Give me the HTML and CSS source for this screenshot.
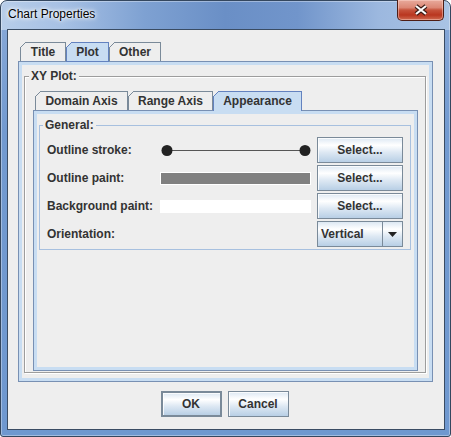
FILE: index.html
```html
<!DOCTYPE html>
<html>
<head>
<meta charset="utf-8">
<title>Chart Properties</title>
<link rel="stylesheet" href="styles.css">
</head>
<body>
<div class="window">
  <div class="titlebar">
    <span class="title">Chart Properties</span>
    <div class="close">
      <svg width="16" height="12" viewBox="0 0 16 12"><path d="M3 2L13 10M13 2L3 10" stroke="#3a1a14" stroke-width="4.4"/><path d="M3 2L13 10M13 2L3 10" stroke="#ffffff" stroke-width="2.2"/></svg>
    </div>
  </div>
  <div class="client">
    <div class="tabbed outer">
      <div class="tabrow">
        <div class="tab t-title">Title</div>
        <div class="tab sel focus t-plot">Plot</div>
        <div class="tab t-other">Other</div>
      </div>
      <div class="panel">
        <fieldset class="etched">
          <legend>XY Plot:</legend>
          <div class="tabbed inner">
            <div class="tabrow">
              <div class="tab t-domain">Domain Axis</div>
              <div class="tab t-range">Range Axis</div>
              <div class="tab sel t-app">Appearance</div>
            </div>
            <div class="panel">
              <fieldset class="general">
                <legend>General:</legend>
                <div class="grid">
                  <div class="lbl">Outline stroke:</div>
                  <div class="val">
                    <svg class="stroke" width="151" height="26" viewBox="0 0 151 26"><line x1="7" y1="13.5" x2="145" y2="13.5" stroke="#555" stroke-width="1"/><circle cx="7" cy="13.5" r="5.5" fill="#222"/><circle cx="145" cy="13.5" r="5.5" fill="#222"/></svg>
                  </div>
                  <button class="btn">Select...</button>

                  <div class="lbl">Outline paint:</div>
                  <div class="val"><div class="swatch gray"></div></div>
                  <button class="btn">Select...</button>

                  <div class="lbl">Background paint:</div>
                  <div class="val"><div class="swatch white"></div></div>
                  <button class="btn">Select...</button>

                  <div class="lbl">Orientation:</div>
                  <div class="val"></div>
                  <div class="combo">
                    <span class="combo-text">Vertical</span>
                    <span class="combo-arrow"><svg width="9" height="5" viewBox="0 0 9 5"><path d="M0 0H9L4.5 5Z" fill="#222"/></svg></span>
                  </div>
                </div>
              </fieldset>
            </div>
          </div>
        </fieldset>
      </div>
    </div>
    <div class="actions">
      <button class="btn default">OK</button>
      <button class="btn">Cancel</button>
    </div>
  </div>
</div>
</body>
</html>
```

FILE: styles.css
```css
* { box-sizing: border-box; }
html, body { margin: 0; padding: 0; }
body {
  width: 451px;
  height: 437px;
  overflow: hidden;
  background: #ffffff;
  font-family: "Liberation Sans", Arial, sans-serif;
  font-size: 12px;
  font-weight: bold;
  color: #333333;
}

/* window frame */
.window {
  width: 451px;
  height: 437px;
  display: flex;
  flex-direction: column;
  border: 1px solid #34475f;
  border-radius: 7px 7px 3px 3px;
  padding: 0 5px 6px 6px;
  background:
    linear-gradient(90deg, #b7cde9 0%, #a6c0e4 14%, #7ea1d2 32%, #6a8fc6 50%, #7195cb 66%, #9cb8df 84%, #a9c3e4 100%) top left / 100% 29px no-repeat,
    linear-gradient(180deg, #8aaad8 0%, #729ad0 30%, #6f98cf 100%);
  box-shadow: inset 0 0 0 1px rgba(255,255,255,0.35);
}
.titlebar {
  height: 28px;
  flex: none;
  display: flex;
  align-items: flex-start;
}
.title {
  margin: 6px 0 0 1px;
  line-height: 14px;
  font-weight: normal;
  color: #000;
  text-shadow: 0 0 4px #fff, 0 0 6px #fff, 0 0 2px #e8f0fa;
}
.close {
  margin: -1px 1px 0 auto;
  width: 47px;
  height: 21px;
  border: 1px solid #4e1d15;
  border-top: none;
  border-radius: 0 0 5px 5px;
  background: linear-gradient(180deg, #e8aa9c 0%, #dc8775 38%, #c6533c 50%, #b9361f 75%, #cf6a50 100%);
  box-shadow: inset 0 0 0 1px rgba(255,220,210,0.45);
  display: flex;
  align-items: center;
  justify-content: center;
}

/* client area */
.client {
  flex: 1;
  min-height: 0;
  display: flex;
  flex-direction: column;
  border: 1px solid #3a4c63;
  background: #eeeeee;
  padding: 12px 11px 12px 10px;
}

/* tabbed panes */
.tabbed {
  flex: 1;
  min-height: 0;
  display: flex;
  flex-direction: column;
}
.tabrow {
  display: flex;
  height: 19px;
  padding-left: 2px;
  flex: none;
}
.tab {
  --bc: #7a8a99;
  position: relative;
  height: 19px;
  padding: 0;
  text-align: center;
  line-height: 18px;
  white-space: nowrap;
  border: 1px solid var(--bc);
  border-bottom: none;
  background: #eeeeee;
}
.t-title { width: 46px; }
.t-plot { width: 43px; }
.t-other { width: 52px; }
.t-domain { width: 93px; }
.t-range { width: 85px; }
.t-app { width: 89px; }
.tab::before {
  content: "";
  position: absolute;
  top: -1px;
  left: -1px;
  width: 6px;
  height: 6px;
  background: linear-gradient(to bottom right, #eeeeee 0, #eeeeee calc(50% - 0.7px), var(--bc) calc(50% - 0.7px), var(--bc) calc(50% + 0.7px), transparent calc(50% + 0.7px));
}
.tab.sel {
  --bc: #6382bf;
  background: #c8ddf2;
  height: 20px;
  margin-bottom: -1px;
  z-index: 1;
}
.tab.focus {
  box-shadow: inset 0 -1px 0 #6382bf, inset 1px 0 0 #c8ddf2;
}
.panel {
  flex: 1;
  min-height: 0;
  display: flex;
  flex-direction: column;
  border: 1px solid #7890b3;
  padding: 3px;
  box-shadow: inset 0 0 0 3px #c8ddf2;
}

/* titled borders */
fieldset {
  min-width: 0;
  min-inline-size: 0;
  margin: 0;
}
legend {
  line-height: 14px;
  padding: 0 2px;
  background: #eeeeee;
}
.etched {
  flex: 1;
  min-height: 0;
  display: flex;
  flex-direction: column;
  margin: 4px 3px 5px 2px;
  padding: 8px 7px 1px 8px;
  border: 1px solid #9d9d9d;
  box-shadow: 1px 1px 0 #ffffff, inset 1px 1px 0 #ffffff;
}
.etched > legend { margin-left: -4px; }

.general {
  flex: none;
  margin: 4px 3px 0 2px;
  padding: 5px 6px 2px 7px;
  border: 1px solid #a7c0df;
}
.general > legend { margin-left: -4px; }

.grid {
  display: grid;
  grid-template-columns: 107px 151px 86px;
  grid-auto-rows: 26px;
  column-gap: 6px;
  row-gap: 2px;
}
.lbl {
  display: flex;
  align-items: center;
  white-space: nowrap;
}
.val {
  display: flex;
  align-items: center;
}
.stroke { display: block; }
.swatch {
  width: 151px;
  height: 13px;
  border: 1px solid #ffffff;
}
.swatch.gray { background: #808080; }
.swatch.white { background: #ffffff; }

/* buttons */
.btn {
  font: inherit;
  color: #333333;
  margin: 0;
  padding: 0;
  height: 26px;
  border: 1px solid #7a8a99;
  background: linear-gradient(180deg, #dde8f3 0%, #ffffff 30%, #dde8f3 60%, #b8cfe5 100%);
  box-shadow: inset 1px 1px 0 rgba(255,255,255,0.8);
}
.combo {
  display: flex;
  height: 26px;
  border: 1px solid #7a8a99;
  background: linear-gradient(180deg, #dde8f3 0%, #ffffff 30%, #dde8f3 60%, #b8cfe5 100%);
}
.combo-text {
  flex: 1;
  padding-left: 3px;
  line-height: 24px;
  color: #333333;
}
.combo-arrow {
  width: 20px;
  border-left: 1px solid #7a8a99;
  display: flex;
  align-items: center;
  justify-content: center;
}

.actions {
  flex: none;
  display: flex;
  justify-content: center;
  gap: 6px;
  margin-top: 9px;
  padding-right: 2px;
}
.actions .btn { width: 61px; }
.actions .btn.default { border: 2px solid #7a8a99; }
```
